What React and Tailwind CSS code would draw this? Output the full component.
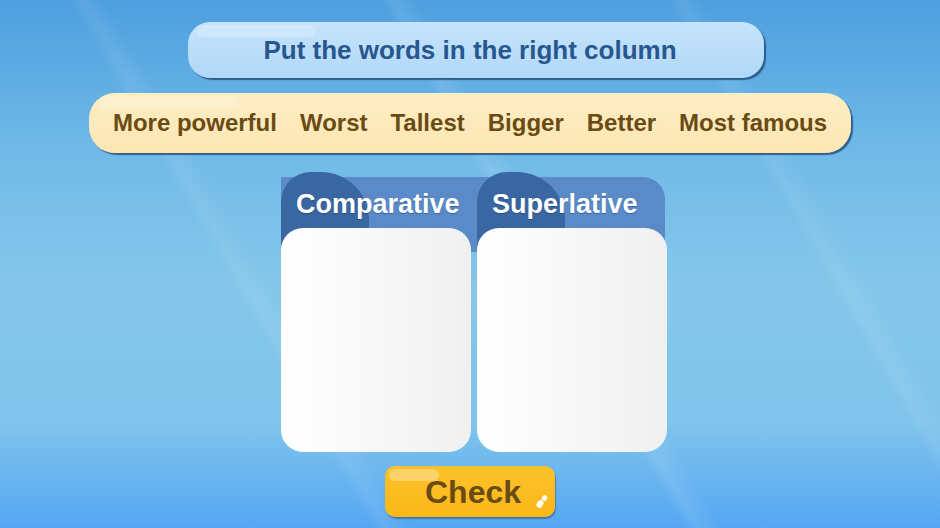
import React from 'react';

const words = ['More powerful', 'Worst', 'Tallest', 'Bigger', 'Better', 'Most famous'];

function Column({ title, first }) {
  return (
    <div className="relative flex w-[190px] flex-col">
      {/* Tab header */}
      <div className="relative h-[80px]">
        <div
          className={`absolute top-[5px] bottom-0 left-0 bg-[#5a8bc8] ${
            first ? '-right-[6px]' : 'right-[2px] rounded-tr-[22px]'
          }`}
        />
        <div className="absolute top-0 bottom-0 left-0 w-[88px] rounded-tl-[30px] rounded-tr-[48px] bg-[#3a67a1]" />
        <div className="relative flex h-[64px] items-center pl-[15px] text-[27px] font-bold text-white [text-shadow:0_1px_1px_rgba(20,50,90,0.45)]">
          {title}
        </div>
      </div>
      {/* Drop area */}
      <div className="relative -mt-[24px] h-[224px] rounded-[22px] bg-gradient-to-r from-white to-[#f0f0f0]" />
    </div>
  );
}

export default function App() {
  return (
    <div
      className="relative flex h-[528px] w-[940px] flex-col items-center overflow-hidden bg-[linear-gradient(180deg,#4d9fdf_0%,#72bbe8_30%,#84c7ea_55%,#80c4ec_80%,#55a7f3_100%)]"
      style={{ fontFamily: '"Liberation Sans", Arial, sans-serif' }}
    >
      {/* light streaks */}
      <div className="pointer-events-none absolute inset-0 bg-[linear-gradient(60deg,transparent_0%,transparent_30%,rgba(255,255,255,0.08)_31%,transparent_33%,transparent_55%,rgba(255,255,255,0.10)_56%,transparent_58%,transparent_78%,rgba(255,255,255,0.08)_79%,transparent_81%)]" />

      {/* Instruction */}
      <div className="relative mt-[22px] ml-[12px] flex h-[56px] w-[576px] items-center justify-center rounded-[22px] bg-gradient-to-b from-[#c6e4fb] to-[#b1d8f8] pr-[12px] shadow-[2px_2px_1px_rgba(40,80,120,0.85)]">
        <div className="absolute top-[3px] left-[8px] h-[12px] w-[120px] rounded-full bg-white/20" />
        <span className="relative text-[26px] font-bold text-[#27578e]">Put the words in the right column</span>
      </div>

      {/* Word bank */}
      <div className="relative mt-[15px] flex h-[60px] w-[762px] items-center justify-center gap-[23px] rounded-[26px] bg-gradient-to-b from-[#fdeec6] to-[#fde6b1] shadow-[2px_2px_1px_rgba(40,80,120,0.85)]">
        <div className="absolute top-[4px] left-[10px] h-[12px] w-[140px] rounded-full bg-white/20" />
        {words.map((w) => (
          <span key={w} className="relative cursor-pointer text-[24px] font-bold text-[#6a4b14]">
            {w}
          </span>
        ))}
      </div>

      {/* Columns */}
      <div className="mt-[19px] ml-[8px] flex gap-[6px]">
        <Column title="Comparative" first />
        <Column title="Superlative" />
      </div>

      {/* Check button */}
      <button className="relative mt-[14px] flex h-[51px] w-[170px] items-center justify-center rounded-[10px] bg-gradient-to-b from-[#fcc22b] to-[#fbb816] pl-[6px] shadow-[1px_2px_1px_rgba(60,90,120,0.6)]">
        <div className="absolute top-[3px] left-[4px] h-[12px] w-[50px] rounded-full bg-white/30" />
        <span className="relative text-[32px] font-bold text-[#6a4b16]">Check</span>
        <span className="absolute right-[8px] bottom-[16px] h-[6px] w-[5px] rotate-[30deg] rounded-full bg-white" />
        <span className="absolute right-[12px] bottom-[9px] h-[8px] w-[6px] rotate-[30deg] rounded-full bg-white" />
      </button>
    </div>
  );
}
